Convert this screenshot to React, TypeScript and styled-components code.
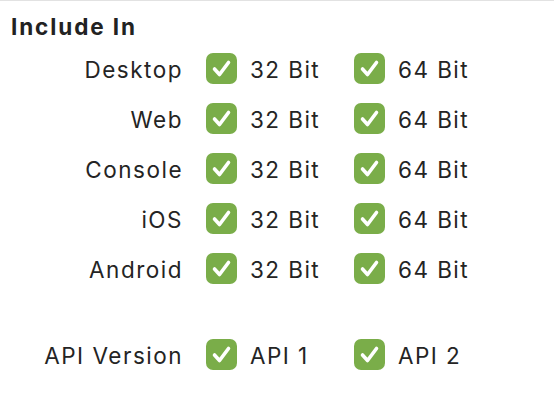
import React from "react";
import styled, { createGlobalStyle } from "styled-components";

const Global = createGlobalStyle`
  html, body { margin: 0; padding: 0; background: #ffffff; }
  body { font-family: Inter, "Noto Sans", "Liberation Sans", sans-serif; color: #242424; }
`;

const Panel = styled.div`
  border-top: 1px solid #e2e2e2;
  padding: 13px 0 0 11px;
  width: 554px;
  height: 405px;
  box-sizing: border-box;
`;

const Title = styled.div`
  font-size: 22.5px;
  line-height: 26px;
  font-weight: 700;
  letter-spacing: 1.9px;
  color: #222;
  margin-bottom: 3px;
`;

const Row = styled.div<{ $spaced?: boolean }>`
  display: flex;
  align-items: center;
  height: 50px;
  margin-top: ${(p) => (p.$spaced ? "36px" : "0")};
`;

const Label = styled.div`
  width: 172px;
  text-align: right;
  margin-right: 23px;
  font-size: 22.5px;
  letter-spacing: 1.5px;
  line-height: 30px;
  padding-top: 3px;
`;

const Option = styled.label`
  display: flex;
  align-items: center;
  gap: 13px;
  width: 148px;
  font-size: 22.5px;
  letter-spacing: 1.45px;
  line-height: 30px;
`;

const OptionText = styled.span`
  padding-top: 3px;
`;

const Box = styled.span`
  width: 31px;
  height: 31px;
  border-radius: 7px;
  background: #7aad49;
  display: flex;
  align-items: center;
  justify-content: center;
  flex-shrink: 0;
`;

const Check = () => (
  <Box>
    <svg width="31" height="31" viewBox="0 0 31 31">
      <path
        d="M8.5 16 L13.5 21.5 L22.5 9.5"
        fill="none"
        stroke="#ffffff"
        strokeWidth="3.6"
        strokeLinecap="round"
        strokeLinejoin="round"
      />
    </svg>
  </Box>
);

const rows = ["Desktop", "Web", "Console", "iOS", "Android"];

export default function App() {
  return (
    <>
      <Global />
      <Panel>
        <Title>Include In</Title>
        {rows.map((r) => (
          <Row key={r}>
            <Label>{r}</Label>
            <Option>
              <Check />
              <OptionText>32 Bit</OptionText>
            </Option>
            <Option>
              <Check />
              <OptionText>64 Bit</OptionText>
            </Option>
          </Row>
        ))}
        <Row $spaced>
          <Label>API Version</Label>
          <Option>
            <Check />
            <OptionText>API 1</OptionText>
          </Option>
          <Option>
            <Check />
            <OptionText>API 2</OptionText>
          </Option>
        </Row>
      </Panel>
    </>
  );
}
